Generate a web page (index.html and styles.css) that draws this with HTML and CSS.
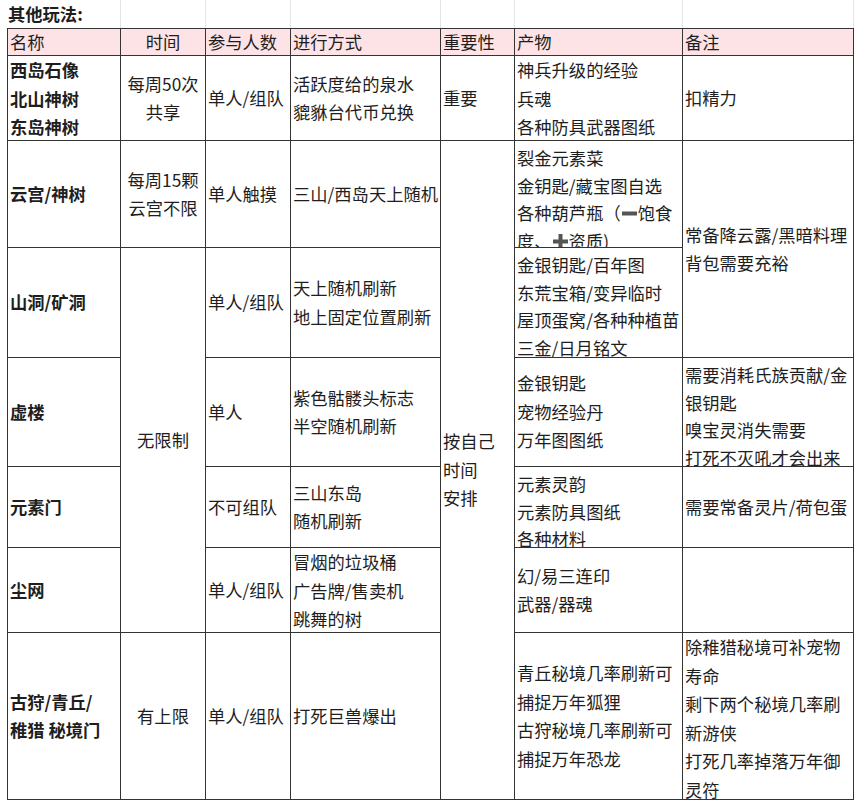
FILE: index.html
```html
<!DOCTYPE html>
<html lang="zh-CN">
<head>
<meta charset="utf-8">
<title>其他玩法</title>
<link rel="stylesheet" href="styles.css">
</head>
<body>
<div class="sheet">
  <div class="title-row">
    <div class="tcell title">其他玩法:</div>
    <div class="tcell"></div>
    <div class="tcell"></div>
    <div class="tcell"></div>
    <div class="tcell"></div>
    <div class="tcell"></div>
    <div class="tcell"></div>
  </div>
  <div class="grid">
    <!-- header -->
    <div class="cell head c1"><div class="txt">名称</div></div>
    <div class="cell head c2 center"><div class="txt">时间</div></div>
    <div class="cell head c3"><div class="txt">参与人数</div></div>
    <div class="cell head c4"><div class="txt">进行方式</div></div>
    <div class="cell head c5"><div class="txt">重要性</div></div>
    <div class="cell head c6"><div class="txt">产物</div></div>
    <div class="cell head c7"><div class="txt">备注</div></div>

    <!-- row 1 -->
    <div class="cell c1 name"><div class="txt">西岛石像<br>北山神树<br>东岛神树</div></div>
    <div class="cell c2 center"><div class="txt">每周50次<br>共享</div></div>
    <div class="cell c3"><div class="txt">单人/组队</div></div>
    <div class="cell c4"><div class="txt">活跃度给的泉水<br>貔貅台代币兑换</div></div>
    <div class="cell c5"><div class="txt">重要</div></div>
    <div class="cell c6"><div class="txt">神兵升级的经验<br>兵魂<br>各种防具武器图纸</div></div>
    <div class="cell c7"><div class="txt">扣精力</div></div>

    <!-- row 2 -->
    <div class="cell c1 name"><div class="txt">云宫/神树</div></div>
    <div class="cell c2 center"><div class="txt">每周15颗<br>云宫不限</div></div>
    <div class="cell c3"><div class="txt">单人触摸</div></div>
    <div class="cell c4"><div class="txt">三山/西岛天上随机</div></div>
    <div class="cell c5 span6"><div class="txt">按自己<br>时间<br>安排</div></div>
    <div class="cell c6 ovf"><div class="txt">裂金元素菜<br>金钥匙/藏宝图自选<br>各种葫芦瓶（<svg class="sym" width="17" height="17" viewBox="0 0 17 17"><rect x="1" y="6.5" width="15" height="4" fill="#555"/></svg>饱食<br>度、<svg class="sym" width="17" height="17" viewBox="0 0 17 17"><rect x="1" y="6.5" width="15" height="4" fill="#555"/><rect x="6.5" y="1" width="4" height="15" fill="#555"/></svg>资质)</div></div>
    <div class="cell c7 span2"><div class="txt">常备降云露/黑暗料理<br>背包需要充裕</div></div>

    <!-- row 3 -->
    <div class="cell c1 name"><div class="txt">山洞/矿洞</div></div>
    <div class="cell c2 center span4"><div class="txt">无限制</div></div>
    <div class="cell c3"><div class="txt">单人/组队</div></div>
    <div class="cell c4"><div class="txt">天上随机刷新<br>地上固定位置刷新</div></div>
    <div class="cell c6 ovf"><div class="txt">金银钥匙/百年图<br>东荒宝箱/变异临时<br>屋顶蛋窝/各种种植苗<br>三金/日月铭文</div></div>

    <!-- row 4 -->
    <div class="cell c1 name"><div class="txt">虚楼</div></div>
    <div class="cell c3"><div class="txt">单人</div></div>
    <div class="cell c4"><div class="txt">紫色骷髅头标志<br>半空随机刷新</div></div>
    <div class="cell c6"><div class="txt">金银钥匙<br>宠物经验丹<br>万年图图纸</div></div>
    <div class="cell c7 ovf"><div class="txt">需要消耗氏族贡献/金<br>银钥匙<br>嗅宝灵消失需要<br>打死不灭吼才会出来</div></div>

    <!-- row 5 -->
    <div class="cell c1 name"><div class="txt">元素门</div></div>
    <div class="cell c3"><div class="txt">不可组队</div></div>
    <div class="cell c4"><div class="txt">三山东岛<br>随机刷新</div></div>
    <div class="cell c6 ovf"><div class="txt">元素灵韵<br>元素防具图纸<br>各种材料</div></div>
    <div class="cell c7"><div class="txt">需要常备灵片/荷包蛋</div></div>

    <!-- row 6 -->
    <div class="cell c1 name"><div class="txt">尘网</div></div>
    <div class="cell c3"><div class="txt">单人/组队</div></div>
    <div class="cell c4"><div class="txt">冒烟的垃圾桶<br>广告牌/售卖机<br>跳舞的树</div></div>
    <div class="cell c6"><div class="txt">幻/易三连印<br>武器/器魂</div></div>
    <div class="cell c7"><div class="txt"></div></div>

    <!-- row 7 -->
    <div class="cell c1 name"><div class="txt">古狩/青丘/<br>稚猎 秘境门</div></div>
    <div class="cell c2 center"><div class="txt">有上限</div></div>
    <div class="cell c3"><div class="txt">单人/组队</div></div>
    <div class="cell c4"><div class="txt">打死巨兽爆出</div></div>
    <div class="cell c6"><div class="txt">青丘秘境几率刷新可<br>捕捉万年狐狸<br>古狩秘境几率刷新可<br>捕捉万年恐龙</div></div>
    <div class="cell c7"><div class="txt">除稚猎秘境可补宠物<br>寿命<br>剩下两个秘境几率刷<br>新游侠<br>打死几率掉落万年御<br>灵符</div></div>
  </div>
</div>
</body>
</html>
```

FILE: styles.css
```css
html, body {
  margin: 0;
  padding: 0;
  background: #ffffff;
}

body {
  font-family: "Noto Sans CJK SC", "Noto Sans", sans-serif;
  font-size: 17.3px;
  color: #1e1e1e;
  width: 860px;
  height: 800px;
  overflow: hidden;
}

.sheet {
  padding-left: 7px;
}

.title-row {
  display: grid;
  grid-template-columns: 114px 85px 85px 150px 74px 168px 171px;
  height: 28px;
}

.tcell {
  border-right: 1px solid #e4e4e4;
  box-sizing: border-box;
}

.title {
  font-weight: 700;
  line-height: 28px;
  padding-left: 1px;
  white-space: nowrap;
}

.grid {
  display: grid;
  width: 847px;
  box-sizing: border-box;
  grid-template-columns: 113px 85px 85px 150px 74px 168px 171px;
  grid-template-rows: 27px 85px 107px 110px 109px 81px 85px 167px;
  border-left: 1px solid #333;
  border-top: 1px solid #333;
}

.cell {
  box-sizing: border-box;
  border-right: 1px solid #333;
  border-bottom: 1px solid #333;
  display: flex;
  flex-direction: column;
  justify-content: safe center;
  padding: 0 2px;
  overflow: hidden;
  white-space: nowrap;
  line-height: 28.5px;
}

.head {
  background: #fde3e6;
  line-height: 26px;
}

.name {
  font-weight: 700;
}

.center {
  text-align: center;
}

.ovf {
  padding-top: 3px;
  line-height: 27.7px;
}

.sym {
  vertical-align: -2px;
}

.c1 { grid-column: 1; }
.c2 { grid-column: 2; }
.c3 { grid-column: 3; }
.c4 { grid-column: 4; }
.c5 { grid-column: 5; }
.c6 { grid-column: 6; }
.c7 { grid-column: 7; }

.span2 { grid-row-end: span 2; }
.span4 { grid-row-end: span 4; }
.span6 { grid-row-end: span 6; }
```
